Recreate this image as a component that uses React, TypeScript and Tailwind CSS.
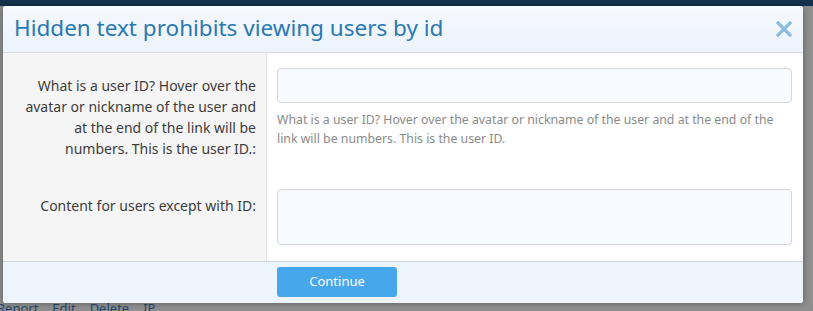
import React from "react";

const HINT =
  "What is a user ID? Hover over the avatar or nickname of the user and at the end of the link will be numbers. This is the user ID.";

function CloseIcon() {
  return (
    <svg width="16" height="16" viewBox="0 0 16 16" className="block">
      <path d="M2 2 L14 14 M14 2 L2 14" stroke="#8cbce2" strokeWidth="3.2" strokeLinecap="square" />
    </svg>
  );
}

export default function App() {
  return (
    <div className="relative w-[813px] h-[311px] overflow-hidden bg-[#8e8e8e] font-['Noto_Sans',sans-serif]">
      {/* dimmed page behind the overlay */}
      <div className="absolute inset-0 flex flex-col">
        <div className="h-[6px] bg-[#14324d]" />
        <div className="flex-1" />
        <div className="flex gap-[14px] text-[13px] leading-[13px] text-[#25466a] -translate-x-[3px] translate-y-[4px]">
          <span>Report</span>
          <span>Edit</span>
          <span>Delete</span>
          <span>IP</span>
        </div>
      </div>

      {/* modal */}
      <div className="absolute left-[3px] top-[6px] w-[800px] h-[297px] flex flex-col rounded-[3px] overflow-hidden bg-white shadow-[0_0_6px_rgba(0,0,0,0.35)]">
        <div className="h-[47px] shrink-0 flex items-center justify-between pl-[11px] pr-[11px] bg-gradient-to-b from-[#f6f9fe] to-[#ecf3fc] border-b border-[#d8dde3]">
          <h1 className="text-[22.5px] leading-none text-[#2a78b3] -mt-[1px]">Hidden text prohibits viewing users by id</h1>
          <CloseIcon />
        </div>

        <div className="flex-1 flex">
          <div className="w-[264px] shrink-0 bg-[#f5f5f5] border-r border-[#e2e2e2] flex flex-col items-end pr-[10px] text-[14px] leading-[21px] text-[#3c3c3c] text-right">
            <p className="mt-[22px] w-[240px]">
              What is a user ID? Hover over the avatar or nickname of the user and at the end of the link will be numbers. This is the user ID.:
            </p>
            <p className="mt-[36px]">Content for users except with ID:</p>
          </div>
          <div className="flex-1 flex flex-col pl-[10px] pr-[11px] pt-[15px]">
            <div className="h-[35px] rounded-[4px] border border-[#d6d6d6] bg-[#f7fafe]" />
            <p className="mt-[7px] text-[12.3px] leading-[19px] text-[#8a8a8a] pr-[8px]">{HINT}</p>
            <div className="mt-[41px] h-[56px] rounded-[4px] border border-[#d6d6d6] bg-[#f7fafe]" />
          </div>
        </div>

        <div className="h-[42px] shrink-0 flex items-start pl-[274px] pt-[5px] bg-[#edf4fc] border-t border-[#cfd4da]">
          <button className="w-[120px] h-[30px] rounded-[3px] bg-[#47a7eb] text-white text-[13px]">Continue</button>
        </div>
      </div>
    </div>
  );
}
